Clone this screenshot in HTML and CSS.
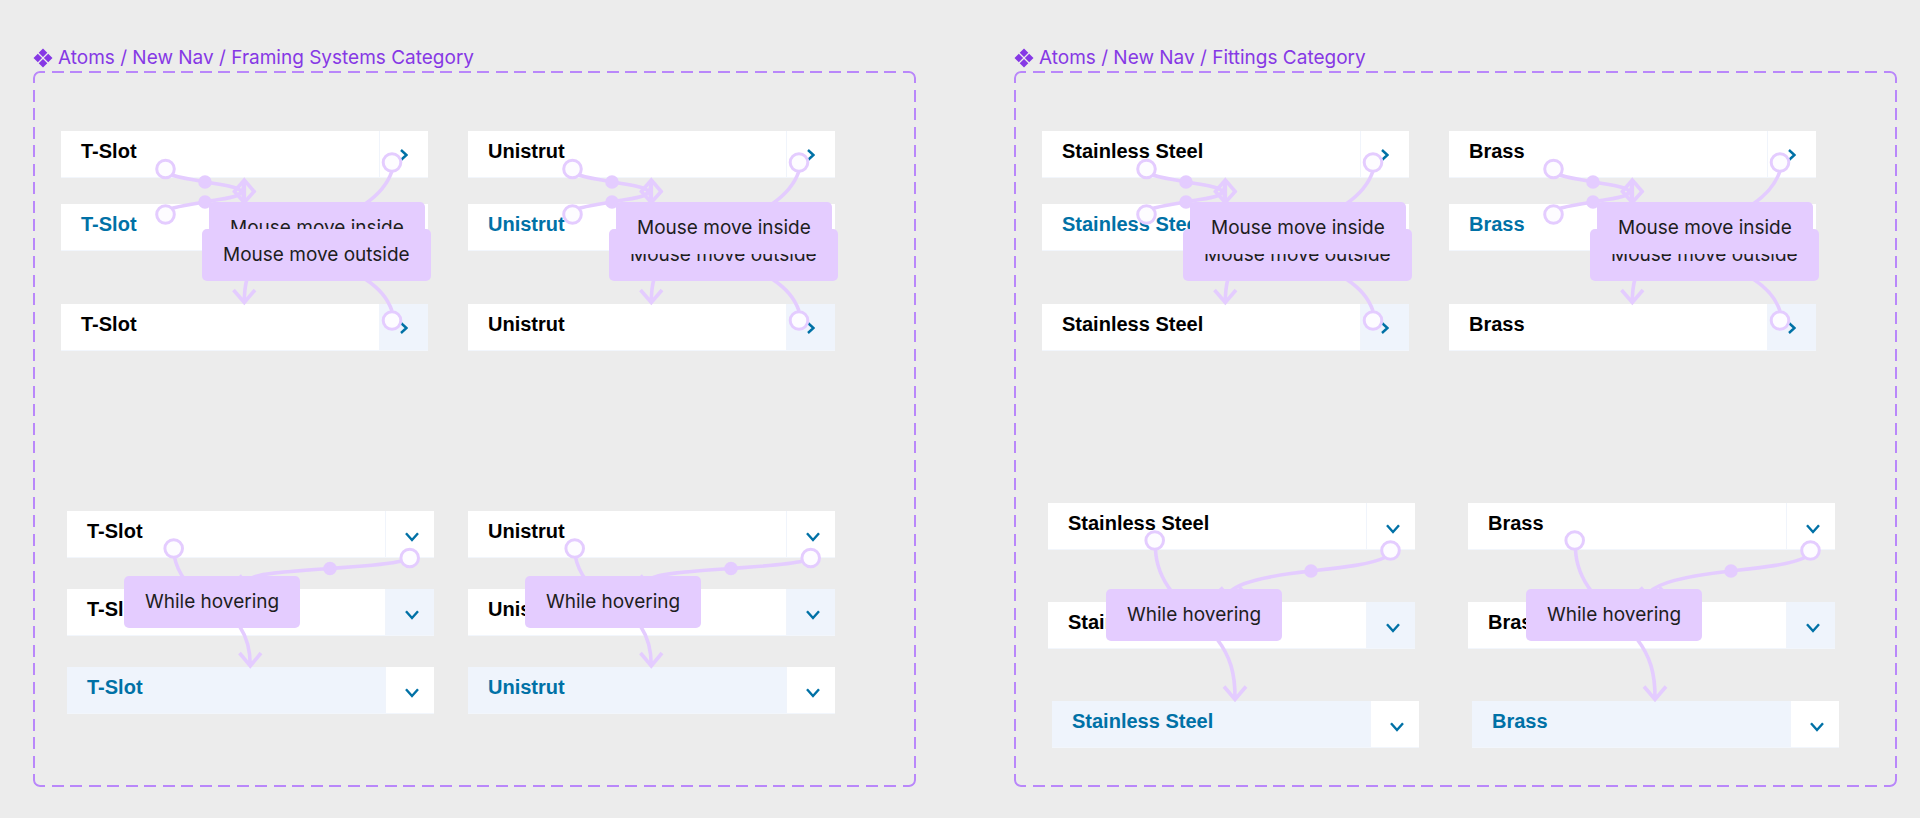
FILE: index.html
```html
<!DOCTYPE html>
<html lang="en">
<head>
  <meta charset="UTF-8">
  <meta name="viewport" content="width=device-width, initial-scale=1.0">
  <title>Atoms / New Nav</title>
  <link rel="stylesheet" href="styles.css">
</head>
<body>
  <!-- shared icons and connector drawings -->
  <svg class="defs" width="0" height="0" aria-hidden="true">
    <symbol id="component" viewBox="0 0 20 20">
      <path d="M10 0.5 14.3 4.8 10 9.1 5.7 4.8ZM10 10.9 14.3 15.2 10 19.5 5.7 15.2ZM4.8 5.7 9.1 10 4.8 14.3 0.5 10ZM15.2 5.7 19.5 10 15.2 14.3 10.9 10Z"/>
    </symbol>
    <symbol id="right" viewBox="0 0 8 12">
      <path d="M1 1 6.4 6 1 11"/>
    </symbol>
    <symbol id="down" viewBox="0 0 14 10">
      <path d="M1 1.2 7 8 13 1.2"/>
    </symbol>
    <symbol id="wires-move" viewBox="0 0 367 220">
      <path d="M108 43C118 47 130 48 144 51C156 53 168 54.5 175 57S183 64 183 71"/>
      <path d="M108 78.5C118 74.5 130 73.5 144 71C156 68.5 168 67.5 175 65S183 57 183 49"/>
      <path d="M172.5 59.5 183.3 71.5 194 59.5M172.5 61.5 183.3 49 194 61.5M183.3 49V76"/>
      <path d="M331 40C327 52 317 64 304 73M331 180C327 168 318 157 304 148"/>
      <path d="M186 148C184 155 183.3 162 183.3 171M172.5 159 183.3 171.5 194 159"/>
      <circle class="dot" cx="144" cy="51" r="5"/>
      <circle class="dot" cx="144" cy="71" r="5"/>
      <circle class="end" cx="104.5" cy="38" r="8.8"/>
      <circle class="end" cx="104.5" cy="83.5" r="8.8"/>
      <circle class="end" cx="331" cy="31.5" r="8.8"/>
      <circle class="end" cx="331" cy="189.5" r="8.8"/>
    </symbol>
    <symbol id="wires-hover" viewBox="0 0 367 203">
      <path d="M107.5 46C109 54 112 61 118 69"/>
      <path d="M335 50C318 54 290 55.5 263 57.5S188 62 183.3 68M172.5 64.5 183.3 77 194 64.5"/>
      <path d="M173 116C181 128 183.3 140 183.3 155M172.5 142 183.3 155 194 142"/>
      <circle class="dot" cx="263" cy="57.5" r="5"/>
      <circle class="end" cx="106.7" cy="37.5" r="8.8"/>
      <circle class="end" cx="342.7" cy="47" r="8.8"/>
    </symbol>
    <symbol id="wires-hover-wide" viewBox="0 0 367 245">
      <path d="M107.5 46C108 61 113 75 124 89"/>
      <path d="M338 54C322 62 290 65 263 68S192 77 182 89M172.5 84.5 183.3 97 194 84.5"/>
      <path d="M169 136C182 153 187.3 170 187 196M176 183.5 187 196.5 198 183.5"/>
      <circle class="dot" cx="263" cy="68" r="5"/>
      <circle class="end" cx="106.7" cy="37.5" r="8.8"/>
      <circle class="end" cx="342.5" cy="47.5" r="8.8"/>
    </symbol>
  </svg>

  <main class="canvas">
    <section class="component-set">
      <h2 class="set-title"><svg class="set-icon"><use href="#component"/></svg>Atoms / New Nav / Framing Systems Category</h2>
      <div class="frame framing">
        <div class="flows flows-top">
          <div class="flow move">
            <div class="item"><a class="name" href="#">T-Slot</a><button class="arrow" aria-label="Open T-Slot"><svg class="right"><use href="#right"/></svg></button></div>
            <div class="item item-active"><a class="name" href="#">T-Slot</a><button class="arrow" aria-label="Open T-Slot"><svg class="right"><use href="#right"/></svg></button></div>
            <div class="item item-arrow"><a class="name" href="#">T-Slot</a><button class="arrow" aria-label="Open T-Slot"><svg class="right"><use href="#right"/></svg></button></div>
            <svg class="wires"><use href="#wires-move"/></svg>
            <span class="tag tag-inside">Mouse move inside</span>
            <span class="tag tag-outside">Mouse move outside</span>
          </div>
          <div class="flow move">
            <div class="item"><a class="name" href="#">Unistrut</a><button class="arrow" aria-label="Open Unistrut"><svg class="right"><use href="#right"/></svg></button></div>
            <div class="item item-active"><a class="name" href="#">Unistrut</a><button class="arrow" aria-label="Open Unistrut"><svg class="right"><use href="#right"/></svg></button></div>
            <div class="item item-arrow"><a class="name" href="#">Unistrut</a><button class="arrow" aria-label="Open Unistrut"><svg class="right"><use href="#right"/></svg></button></div>
            <svg class="wires"><use href="#wires-move"/></svg>
            <span class="tag tag-outside">Mouse move outside</span>
            <span class="tag tag-inside">Mouse move inside</span>
          </div>
        </div>
        <div class="flows flows-bottom">
          <div class="flow hover">
            <div class="item"><a class="name" href="#">T-Slot</a><button class="arrow" aria-label="Expand T-Slot"><svg class="down"><use href="#down"/></svg></button></div>
            <div class="item item-arrow"><a class="name" href="#">T-Slot</a><button class="arrow" aria-label="Expand T-Slot"><svg class="down"><use href="#down"/></svg></button></div>
            <div class="item item-active item-filled"><a class="name" href="#">T-Slot</a><button class="arrow" aria-label="Expand T-Slot"><svg class="down"><use href="#down"/></svg></button></div>
            <svg class="wires"><use href="#wires-hover"/></svg>
            <span class="tag tag-hover">While hovering</span>
          </div>
          <div class="flow hover">
            <div class="item"><a class="name" href="#">Unistrut</a><button class="arrow" aria-label="Expand Unistrut"><svg class="down"><use href="#down"/></svg></button></div>
            <div class="item item-arrow"><a class="name" href="#">Unistrut</a><button class="arrow" aria-label="Expand Unistrut"><svg class="down"><use href="#down"/></svg></button></div>
            <div class="item item-active item-filled"><a class="name" href="#">Unistrut</a><button class="arrow" aria-label="Expand Unistrut"><svg class="down"><use href="#down"/></svg></button></div>
            <svg class="wires"><use href="#wires-hover"/></svg>
            <span class="tag tag-hover">While hovering</span>
          </div>
        </div>
      </div>
    </section>

    <section class="component-set">
      <h2 class="set-title"><svg class="set-icon"><use href="#component"/></svg>Atoms / New Nav / Fittings Category</h2>
      <div class="frame fittings">
        <div class="flows flows-top">
          <div class="flow move">
            <div class="item"><a class="name" href="#">Stainless Steel</a><button class="arrow" aria-label="Open Stainless Steel"><svg class="right"><use href="#right"/></svg></button></div>
            <div class="item item-active"><a class="name" href="#">Stainless Steel</a><button class="arrow" aria-label="Open Stainless Steel"><svg class="right"><use href="#right"/></svg></button></div>
            <div class="item item-arrow"><a class="name" href="#">Stainless Steel</a><button class="arrow" aria-label="Open Stainless Steel"><svg class="right"><use href="#right"/></svg></button></div>
            <svg class="wires"><use href="#wires-move"/></svg>
            <span class="tag tag-outside">Mouse move outside</span>
            <span class="tag tag-inside">Mouse move inside</span>
          </div>
          <div class="flow move">
            <div class="item"><a class="name" href="#">Brass</a><button class="arrow" aria-label="Open Brass"><svg class="right"><use href="#right"/></svg></button></div>
            <div class="item item-active"><a class="name" href="#">Brass</a><button class="arrow" aria-label="Open Brass"><svg class="right"><use href="#right"/></svg></button></div>
            <div class="item item-arrow"><a class="name" href="#">Brass</a><button class="arrow" aria-label="Open Brass"><svg class="right"><use href="#right"/></svg></button></div>
            <svg class="wires"><use href="#wires-move"/></svg>
            <span class="tag tag-outside">Mouse move outside</span>
            <span class="tag tag-inside">Mouse move inside</span>
          </div>
        </div>
        <div class="flows flows-bottom">
          <div class="flow hover">
            <div class="item"><a class="name" href="#">Stainless Steel</a><button class="arrow" aria-label="Expand Stainless Steel"><svg class="down"><use href="#down"/></svg></button></div>
            <div class="item item-arrow"><a class="name" href="#">Stainless Steel</a><button class="arrow" aria-label="Expand Stainless Steel"><svg class="down"><use href="#down"/></svg></button></div>
            <div class="item item-active item-filled"><a class="name" href="#">Stainless Steel</a><button class="arrow" aria-label="Expand Stainless Steel"><svg class="down"><use href="#down"/></svg></button></div>
            <svg class="wires"><use href="#wires-hover-wide"/></svg>
            <span class="tag tag-hover">While hovering</span>
          </div>
          <div class="flow hover">
            <div class="item"><a class="name" href="#">Brass</a><button class="arrow" aria-label="Expand Brass"><svg class="down"><use href="#down"/></svg></button></div>
            <div class="item item-arrow"><a class="name" href="#">Brass</a><button class="arrow" aria-label="Expand Brass"><svg class="down"><use href="#down"/></svg></button></div>
            <div class="item item-active item-filled"><a class="name" href="#">Brass</a><button class="arrow" aria-label="Expand Brass"><svg class="down"><use href="#down"/></svg></button></div>
            <svg class="wires"><use href="#wires-hover-wide"/></svg>
            <span class="tag tag-hover">While hovering</span>
          </div>
        </div>
      </div>
    </section>
  </main>
</body>
</html>
```

FILE: styles.css
```css
* {
  box-sizing: border-box;
}
body {
  margin: 0;
  background-color: #ececec;
  font-family: Inter, sans-serif;
  font-optical-sizing: none;
}
.defs {
  position: absolute;
}
.canvas {
  display: flex;
  gap: 98px;
  padding: 46px 23px 31px 33px;
}
.component-set {
  flex: 1;
}
.set-title {
  display: flex;
  align-items: center;
  gap: 5px;
  margin: 0 0 1px;
  font-size: 19px;
  font-weight: 400;
  line-height: 24px;
  color: #8638e5;
  white-space: nowrap;
}
.set-icon {
  width: 20px;
  height: 20px;
  fill: #8638e5;
}

/* dashed outline: a solid rounded border seen through a dash mask */
.frame {
  position: relative;
  padding: 60px 28px 0;
}
.frame::before {
  content: "";
  position: absolute;
  inset: 0;
  border: 2px solid #b987fa;
  border-radius: 7px;
  pointer-events: none;
  --dash: #000 0 12px, transparent 12px 19px, #000 19px 31px, transparent 31px 37px;
  --solid: linear-gradient(#000, #000);
  mask:
    repeating-linear-gradient(90deg, var(--dash)) left top / 100% 2px no-repeat,
    repeating-linear-gradient(90deg, var(--dash)) left bottom / 100% 2px no-repeat,
    repeating-linear-gradient(180deg, var(--dash)) left top / 2px 100% no-repeat,
    repeating-linear-gradient(180deg, var(--dash)) right top / 2px 100% no-repeat,
    var(--solid) left top / 12px 12px no-repeat,
    var(--solid) right top / 12px 12px no-repeat,
    var(--solid) left bottom / 12px 12px no-repeat,
    var(--solid) right bottom / 12px 12px no-repeat;
}
.framing {
  padding-bottom: 73px;
}
.fittings {
  padding-bottom: 39px;
}

.flows {
  display: flex;
  gap: 40px;
}
.framing .flows-bottom {
  gap: 34px;
  padding: 160px 0 0 6px;
}
.fittings .flows-bottom {
  gap: 53px;
  padding: 152px 0 0 6px;
}
.flow {
  position: relative;
  display: flex;
  flex-direction: column;
  flex: 0 0 367px;
}
.move {
  gap: 26px;
}
.move .item-arrow {
  margin-top: 27px;
}
.framing .hover {
  gap: 31px;
}
.fittings .hover {
  gap: 52px;
}
.fittings .item-filled {
  margin: 0 -4px 0 4px;
}

.item {
  display: flex;
  height: 47px;
  background-color: #fff;
  border-bottom: 1px solid #f2f6fc;
}
.name {
  flex: 1;
  padding: 8px 20px;
  font-family: "Liberation Sans", Arial, sans-serif;
  font-size: 20px;
  font-weight: 700;
  line-height: 24px;
  color: #000;
  text-decoration: none;
}
.arrow {
  display: flex;
  align-items: center;
  justify-content: center;
  width: 49px;
  padding: 2px 0 0;
  background-color: #fff;
  border: 0;
  border-left: 1px solid #f0f4fb;
  cursor: pointer;
}
.hover .arrow {
  padding: 5px 0 0 4px;
}
.item-active .name {
  color: #0071a6;
}
.item-arrow .arrow,
.item-filled .name {
  background-color: #eff4fc;
}
.right,
.down {
  fill: none;
  stroke: #0071a6;
  stroke-width: 2.4;
}
.right {
  width: 8px;
  height: 12px;
}
.down {
  width: 14px;
  height: 10px;
}

/* prototype connectors and their labels lie over the items */
.wires {
  position: absolute;
  inset: 0;
  width: 100%;
  height: 100%;
  fill: none;
  stroke: #e4ccff;
  stroke-width: 3.6;
  pointer-events: none;
}
.dot {
  fill: #e4ccff;
}
.end {
  fill: #fdfcff;
  stroke-width: 3;
}
.tag {
  position: absolute;
  padding: 14px 21px;
  background-color: #e4ccff;
  border-radius: 5px;
  font-size: 19px;
  line-height: 24px;
  color: #1e1e1e;
  white-space: nowrap;
}
.tag-inside {
  top: 71px;
  left: 148px;
}
.tag-outside {
  top: 98px;
  left: 141px;
}
.framing .tag-hover {
  top: 65px;
  left: 57px;
}
.fittings .tag-hover {
  top: 86px;
  left: 58px;
}
```
